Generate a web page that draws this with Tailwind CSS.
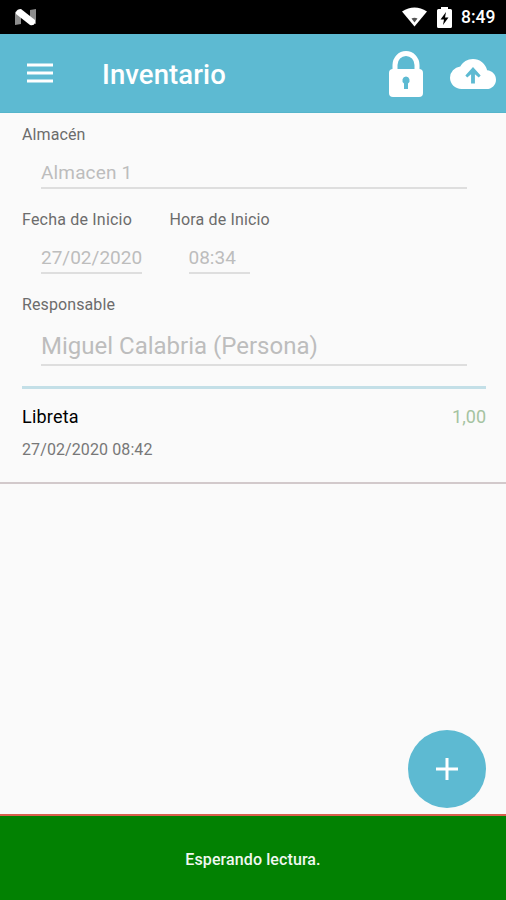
<!DOCTYPE html>
<html lang="es">
<head>
<meta charset="utf-8">
<title>Inventario</title>
<script src="https://cdn.jsdelivr.net/npm/@tailwindcss/browser@4"></script>
</head>
<body class="bg-[#fafafa]">
<div class="relative flex h-[900px] w-[506px] flex-col overflow-hidden bg-[#fafafa] font-[Roboto,sans-serif] text-[16px] text-[#6c6c6c]">
  <div class="flex h-[34px] shrink-0 items-center bg-black pr-[11px] pl-[15px] text-white">
    <svg class="h-[17px] w-[21px]" viewBox="0 0 21 17"><path d="M0 3 6 1v14l-6 1zM15 1l6-1v15l-6-2z" fill="#8d8d8d"/><path d="M1 3Q2 0 6 0L20 11v3q-1 3-5 2L1 5z" fill="#fff"/></svg>
    <svg class="ml-auto h-[20px] w-[25px]" viewBox="0 0 25 20"><path d="M0 4.500Q12.500-3.500 25 4.500L12.500 19.500z" fill="#fff"/><path d="M9.500 11.500q3-1.500 6 0l-3 4z" fill="#555"/></svg>
    <svg class="ml-[10px] h-[21px] w-[15px]" viewBox="0 0 15 21"><path d="M1.500 2H4V0h7v2h2.500Q15 2 15 3.500v16Q15 21 13.500 21h-12Q0 21 0 19.500v-16Q0 2 1.500 2z" fill="#fff"/><path d="M9 5 3.500 12.500H7L6 18l5.500-7.500H8z" fill="#000"/></svg>
    <span class="ml-[9px] w-[34px] pt-px text-[17.500px] font-medium whitespace-nowrap">8:49</span>
  </div>
  <header class="flex h-[79px] shrink-0 items-center border-b border-[#55b5cb] bg-[#5dbad2] pr-[10px] pl-[27px] text-white">
    <svg class="h-[20px] w-[26px]" viewBox="0 0 26 20"><path d="M0 2h26M0 10h26M0 18h26" stroke="#fff" stroke-width="2.800"/></svg>
    <h1 class="ml-[49px] pt-[4px] text-[27.500px] leading-8 font-medium tracking-[0.100px]">Inventario</h1>
    <svg class="ml-auto h-[46px] w-[34px] translate-y-px" viewBox="0 0 34 46"><path d="M6 20v-6a11 11.500 0 0 1 22 0v6" fill="none" stroke="#fff" stroke-width="5"/><rect y="18" width="34" height="28" rx="4" fill="#fff"/><path d="M17 25.500a3.800 3.800 0 0 1 2 6.900V38h-4v-5.600a3.800 3.800 0 0 1 2-6.900z" fill="#5dbad2"/></svg>
    <svg class="ml-[27px] h-[30px] w-[46px] translate-y-px" viewBox="0 4 24 16" preserveAspectRatio="none"><path d="M19.350 10.040A7.490 7.490 0 0 0 12 4C9.110 4 6.600 5.640 5.350 8.040A5.994 5.994 0 0 0 0 14c0 3.310 2.690 6 6 6h13c2.760 0 5-2.240 5-5 0-2.640-2.050-4.780-4.650-4.960z" fill="#fff"/><path d="M12 8.200 16 12.800 15 13.900 13 12.100V17h-2v-4.900l-2 1.800-1-1.100z" fill="#5dbad2"/></svg>
  </header>

  <main class="flex flex-1 flex-col">
    <section class="pr-[20px] pl-[22px]">
      <div class="pt-[12px] leading-5 tracking-[0.100px]">Almacén</div>
      <div class="mx-[19px] flex h-[44px] items-end border-b-2 border-[#dedede] pb-[2px] text-[19px] leading-6 tracking-[0.150px] text-[#bdbdbd]">Almacen 1</div>
      <div class="mt-[21px] flex">
        <div class="w-[147.500px]">
          <div class="leading-5 tracking-[0.200px]">Fecha de Inicio</div>
          <div class="ml-[19px] flex h-[44px] w-[101px] items-end border-b-2 border-[#dedede] pb-[2px] text-[19px] leading-6 text-[#bdbdbd]">27/02/2020</div>
        </div>
        <div>
          <div class="leading-5 tracking-[0.150px]">Hora de Inicio</div>
          <div class="ml-[19px] flex h-[44px] w-[61px] items-end border-b-2 border-[#dedede] pb-[2px] text-[19px] leading-6 text-[#bdbdbd]">08:34</div>
        </div>
      </div>
      <div class="mt-[21px] leading-5 tracking-[0.100px]">Responsable</div>
      <div class="mx-[19px] flex h-[51px] items-end border-b-2 border-[#dedede] pb-[4px] text-[24px] leading-7 text-[#bdbdbd]">Miguel Calabria (Persona)</div>
      <div class="mt-[20px] h-[3px] bg-[#c3dfe7]"></div>
    </section>
    <section class="h-[95px] border-b-2 border-[#d2c9cb] pt-[16px] pr-[20px] pl-[22px]">
      <div class="flex items-center justify-between text-[18px] leading-6">
        <span class="tracking-[0.200px] text-black">Libreta</span>
        <span class="text-[#a5c3a1]">1,00</span>
      </div>
      <div class="mt-[11px] leading-5 tracking-[0.100px] text-[#777]">27/02/2020 08:42</div>
    </section>
  </main>

  <button class="absolute top-[730px] left-[408px] flex size-[78px] items-center justify-center rounded-full bg-[#5dbad2]" aria-label="Añadir">
    <svg class="size-[22px]" viewBox="0 0 22 22"><path d="M0 11h22M11 0v22" stroke="#fff" stroke-width="3"/></svg>
  </button>
  <footer class="flex h-[86px] shrink-0 items-center justify-center border-t-2 border-[#d95f4d] bg-[#028102] pt-[3px] text-[16px] font-medium tracking-[0.100px] text-[#f0f8f0]">Esperando lectura.</footer>
</div>
</body>
</html>
